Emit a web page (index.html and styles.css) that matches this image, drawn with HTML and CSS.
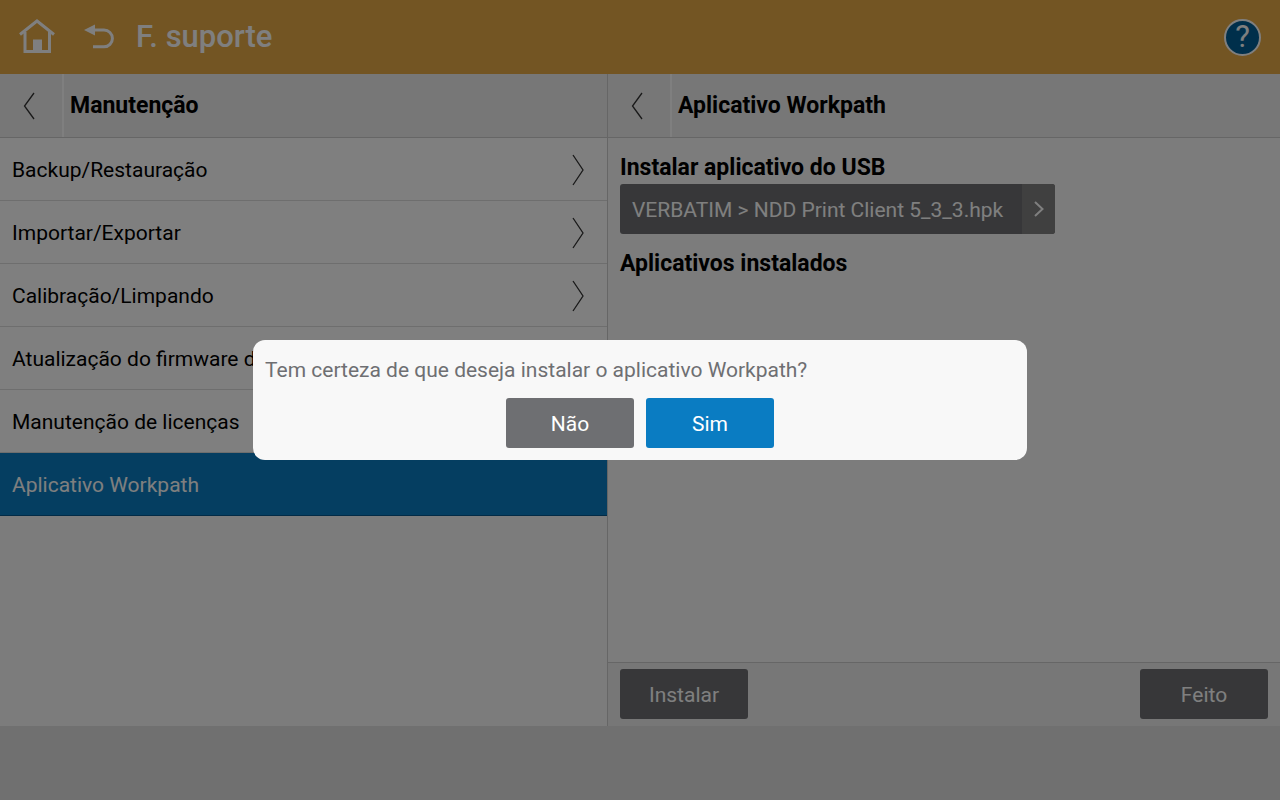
FILE: index.html
```html
<!DOCTYPE html>
<html lang="pt-BR">
<head>
  <meta charset="utf-8">
  <meta name="viewport" content="width=device-width, initial-scale=1">
  <title>F. suporte</title>
  <link rel="stylesheet" href="styles.css">
</head>
<body>
  <header class="topbar">
    <button class="icon-btn" type="button" aria-label="Home">
      <svg width="36" height="36" viewBox="0 0 36 36" fill="none" stroke="#fff" stroke-width="3">
        <path d="M1 15.500 18 2 35 15.500"/>
        <path d="M6 13V32.500H30.500V13"/>
        <path d="M14 20.500h9v12h-9z" fill="#fff" stroke="none"/>
      </svg>
    </button>
    <button class="icon-btn" type="button" aria-label="Voltar">
      <svg width="32" height="26" viewBox="0 0 32 26" fill="none" stroke="#fff" stroke-width="3">
        <path d="M10 6H20A8.400 8.400 0 0 1 20 22.800H9"/>
        <path d="M0 6 11 .5V11.500z" fill="#fff" stroke="none"/>
      </svg>
    </button>
    <h1 class="topbar-title">F. suporte</h1>
    <button class="help-btn" type="button" aria-label="Ajuda">?</button>
  </header>

  <main class="columns">
    <section class="menu">
      <div class="panel-head">
        <button class="back-btn" type="button" aria-label="Voltar">
          <svg width="12" height="28" viewBox="0 0 12 28" fill="none" stroke="#333" stroke-width="1.300"><path d="M11 1 1.500 14 11 27"/></svg>
        </button>
        <h2 class="panel-title">Manutenção</h2>
      </div>
      <nav class="menu-list">
        <a class="menu-item" href="#">Backup/Restauração
          <svg width="13" height="32" viewBox="0 0 13 32" fill="none" stroke="#333" stroke-width="1.300"><path d="M2 1 12 16 2 31"/></svg>
        </a>
        <a class="menu-item" href="#">Importar/Exportar
          <svg width="13" height="32" viewBox="0 0 13 32" fill="none" stroke="#333" stroke-width="1.300"><path d="M2 1 12 16 2 31"/></svg>
        </a>
        <a class="menu-item" href="#">Calibração/Limpando
          <svg width="13" height="32" viewBox="0 0 13 32" fill="none" stroke="#333" stroke-width="1.300"><path d="M2 1 12 16 2 31"/></svg>
        </a>
        <a class="menu-item" href="#">Atualização do firmware do USB</a>
        <a class="menu-item" href="#">Manutenção de licenças</a>
        <a class="menu-item selected" href="#">Aplicativo Workpath</a>
      </nav>
    </section>

    <section class="detail">
      <div class="panel-head">
        <button class="back-btn" type="button" aria-label="Voltar">
          <svg width="12" height="28" viewBox="0 0 12 28" fill="none" stroke="#333" stroke-width="1.300"><path d="M11 1 1.500 14 11 27"/></svg>
        </button>
        <h2 class="panel-title">Aplicativo Workpath</h2>
      </div>
      <div class="detail-body">
        <h3 class="section-title">Instalar aplicativo do USB</h3>
        <button class="file-btn" type="button">
          <span class="file-name">VERBATIM &gt; NDD Print Client 5_3_3.hpk</span>
          <span class="file-arrow">
            <svg width="10" height="16" viewBox="0 0 10 16" fill="none" stroke="#fff" stroke-width="2"><path d="M1 1 8.500 8 1 15"/></svg>
          </span>
        </button>
        <h3 class="section-title">Aplicativos instalados</h3>
      </div>
      <div class="actions">
        <button class="btn" type="button">Instalar</button>
        <button class="btn" type="button">Feito</button>
      </div>
    </section>
  </main>

  <footer class="bottombar"></footer>

  <div class="overlay">
    <dialog class="confirm" open aria-labelledby="confirm-text">
      <p class="confirm-text" id="confirm-text">Tem certeza de que deseja instalar o aplicativo Workpath?</p>
      <div class="confirm-buttons">
        <button class="btn" type="button">Não</button>
        <button class="btn btn-primary" type="button">Sim</button>
      </div>
    </dialog>
  </div>
</body>
</html>
```
FILE: styles.css
```css
* {
  box-sizing: border-box;
}

body {
  margin: 0;
  min-height: 100vh;
  display: flex;
  flex-direction: column;
  background: #f8f8f8;
  color: #000;
  font-family: Roboto, "Noto Sans", sans-serif;
  font-size: 21px;
  line-height: 32px;
}

h1, h2, h3, p {
  margin: 0;
}

button {
  border: 0;
  padding: 0;
  font: inherit;
  cursor: pointer;
}

svg {
  display: block;
  flex: none;
}

/* Top bar */
.topbar {
  display: flex;
  align-items: center;
  height: 74px;
  padding: 0 19px;
  background: #e6aa46;
  color: #fff;
}

.icon-btn {
  margin-right: 29px;
  background: none;
}

.icon-btn + .icon-btn {
  margin-right: 20px;
}

.topbar-title {
  flex: 1;
  font-size: 31px;
  font-weight: 500;
}

.help-btn {
  width: 37px;
  height: 37px;
  border: 2px solid #fff;
  border-radius: 50%;
  background: #005f96;
  color: #fff;
  font-size: 31px;
}

/* Two columns */
.columns {
  flex: 1;
  display: flex;
}

.menu {
  flex: 0 0 47.5%;
  border-right: 1px solid #ccc;
}

.detail {
  flex: 1;
  display: flex;
  flex-direction: column;
}

.panel-head {
  display: flex;
  height: 64px;
  border-bottom: 1px solid #ccc;
  background: #eee;
}

.back-btn {
  display: flex;
  align-items: center;
  width: 64px;
  padding-left: 23px;
  border-right: 2px solid #fff;
  background: none;
}

.panel-title {
  padding-left: 6px;
  font-size: 23px;
  font-weight: bold;
  line-height: 64px;
}

/* Menu */
.menu-item {
  display: flex;
  align-items: center;
  justify-content: space-between;
  height: 63px;
  padding: 1px 23px 0 12px;
  border-bottom: 1px solid #ddd;
  background: #fff;
  color: #000;
  text-decoration: none;
}

.menu-item.selected {
  border-color: #06568c;
  background: #0a7cc2;
  color: #fff;
}

/* Detail */
.detail-body {
  flex: 1;
  padding: 14px 12px;
}

.section-title {
  font-size: 23px;
  font-weight: bold;
}

.file-btn {
  display: flex;
  width: 435px;
  max-width: 100%;
  height: 50px;
  margin-bottom: 14px;
  border-radius: 3px;
  overflow: hidden;
  background: #6e6f72;
  color: #fff;
  line-height: 52px;
  text-align: left;
}

.file-name {
  flex: 1;
  padding-left: 12px;
  white-space: nowrap;
}

.file-arrow {
  display: flex;
  align-items: center;
  justify-content: center;
  width: 33px;
  background: #808080;
}

.actions {
  display: flex;
  justify-content: space-between;
  padding: 6px 12px 7px;
  border-top: 1px solid #ccc;
  background: #eee;
}

.btn {
  width: 128px;
  height: 50px;
  padding-top: 1px;
  border-radius: 3px;
  background: #6e6f72;
  color: #fff;
}

.btn-primary {
  background: #0a7cc2;
}

.bottombar {
  height: 74px;
  background: #e0e0e0;
}

/* Confirmation */
.overlay {
  position: fixed;
  inset: 0;
  display: flex;
  align-items: center;
  justify-content: center;
  background: rgba(0, 0, 0, 0.5);
}

.confirm {
  position: static;
  width: 774px;
  max-width: 90%;
  margin: 0;
  padding: 14px 12px 12px;
  border: 0;
  border-radius: 12px;
  background: #f8f8f8;
}

.confirm-text {
  margin-bottom: 12px;
  color: #6e6f72;
}

.confirm-buttons {
  display: flex;
  justify-content: center;
  gap: 12px;
}
```
